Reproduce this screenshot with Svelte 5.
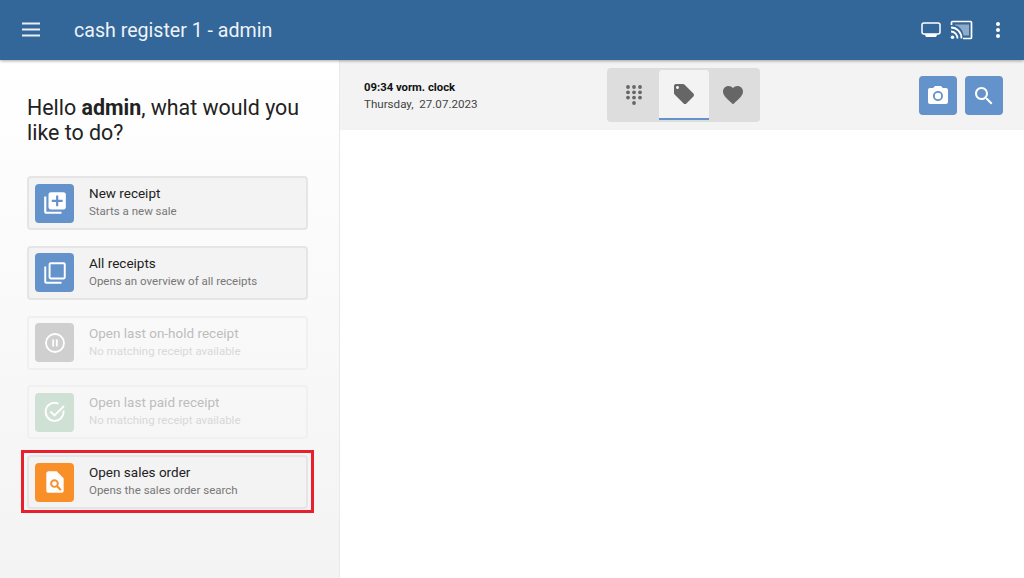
<script>
  const actions = [
    { title: "New receipt", sub: "Starts a new sale", icon: "new", color: "blue" },
    { title: "All receipts", sub: "Opens an overview of all receipts", icon: "all", color: "blue" },
    { title: "Open last on-hold receipt", sub: "No matching receipt available", icon: "pause", color: "grey", disabled: true },
    { title: "Open last paid receipt", sub: "No matching receipt available", icon: "check", color: "green", disabled: true },
    { title: "Open sales order", sub: "Opens the sales order search", icon: "order", color: "orange", marked: true },
  ];
</script>

<div class="page">
  <header class="topbar">
    <svg class="menu" viewBox="0 0 20 16" width="20" height="16">
      <path d="M1 1.5h18M1 7.5h18M1 13.5h18" stroke="#e8eef5" stroke-width="2" fill="none" />
    </svg>
    <h1>cash register 1 - admin</h1>
    <div class="top-icons">
      <svg viewBox="0 0 20 16" width="20" height="16" fill="none" stroke="#fff" stroke-width="1.5">
        <rect x="1" y="1" width="18" height="11" rx="2" />
        <path d="M3.500 12h13l-1.500 3H5z" fill="#fff" stroke="none" />
      </svg>
      <svg viewBox="0 0 23 20" width="23" height="20" fill="none" stroke="#fff">
        <path d="M1.500 5V2.500c0-.6.400-1 1-1h18c.6 0 1 .4 1 1v15c0 .6-.4 1-1 1H13" stroke-width="1.700" />
        <path d="M5 4.500h14v11h-5.500C13 10 9.500 6 5 5.500z" fill="#fff" fill-opacity="0.45" stroke="none" />
        <path d="M1 7.500c5.800 0 10.500 4.700 10.500 11M1 11.500c3.600 0 6.500 3.200 6.500 7" stroke-width="1.800" />
        <circle cx="2.500" cy="17.300" r="1.800" fill="#fff" stroke="none" />
      </svg>
      <svg class="dots" viewBox="0 0 6 18" width="6" height="18" fill="#fff">
        <circle cx="3" cy="3" r="2" /><circle cx="3" cy="9" r="2" /><circle cx="3" cy="15" r="2" />
      </svg>
    </div>
  </header>

  <div class="body">
    <aside class="side">
      <h2>Hello <b>admin</b>, what would you like to do?</h2>
      <div class="actions">
        {#each actions as a}
          <div class="action" class:disabled={a.disabled} class:marked={a.marked}>
            <span class="tile {a.color}">
              {#if a.icon === "new"}
                <svg viewBox="0 0 24 24" width="26" height="26" fill="#fff">
                  <path d="M2 6v14c0 1.100.9 2 2 2h14v-2H4V6z" />
                  <path d="M20 2H8c-1.100 0-2 .9-2 2v12c0 1.100.9 2 2 2h12c1.100 0 2-.9 2-2V4c0-1.100-.9-2-2-2zm-1 9h-4v4h-2v-4H9V9h4V5h2v4h4z" />
                </svg>
              {:else if a.icon === "all"}
                <svg viewBox="0 0 24 24" width="26" height="26" fill="none" stroke="#fff" stroke-width="1.800">
                  <path d="M3 6v14c0 .6.400 1 1 1h14" />
                  <rect x="7" y="3" width="14" height="14" rx="1" />
                </svg>
              {:else if a.icon === "pause"}
                <svg viewBox="0 0 24 24" width="24" height="24" fill="none" stroke="#fff" stroke-width="1.800">
                  <circle cx="12" cy="12" r="9" />
                  <path d="M10.200 8.500v7M13.800 8.500v7" />
                </svg>
              {:else if a.icon === "check"}
                <svg viewBox="0 0 24 24" width="24" height="24" fill="none" stroke="#fff" stroke-width="1.800">
                  <path d="M20.500 10.500A9 9 0 1 1 15.500 3.700" />
                  <path d="M7.500 11.500l4 4L21 6" />
                </svg>
              {:else}
                <svg viewBox="0 0 24 24" width="26" height="26" fill="#fff">
                  <path d="M6 2h7.500L20 8.500V20c0 1.100-.9 2-2 2H6c-1.100 0-2-.9-2-2V4c0-1.100.9-2 2-2z" />
                  <circle cx="11.500" cy="13.400" r="3.100" fill="none" stroke="#f98f28" stroke-width="1.800" />
                  <path d="M13.800 15.700l3.600 3.800" stroke="#f98f28" stroke-width="2" />
                </svg>
              {/if}
            </span>
            <span class="label">
              <strong>{a.title}</strong>
              <small>{a.sub}</small>
            </span>
          </div>
        {/each}
      </div>
    </aside>

    <main class="content">
      <div class="toolbar">
        <div class="clock">
          <b>09:34 vorm. clock</b>
          <span>Thursday,&nbsp; 27.07.2023</span>
        </div>
        <div class="tabs">
          <div class="tab">
            <svg viewBox="0 0 16 20" width="16" height="20" fill="#666">
              <circle cx="2" cy="2" r="1.900" /><circle cx="8" cy="2" r="1.900" /><circle cx="14" cy="2" r="1.900" />
              <circle cx="2" cy="7.300" r="1.900" /><circle cx="8" cy="7.300" r="1.900" /><circle cx="14" cy="7.300" r="1.900" />
              <circle cx="2" cy="12.600" r="1.900" /><circle cx="8" cy="12.600" r="1.900" /><circle cx="14" cy="12.600" r="1.900" />
              <circle cx="8" cy="18" r="1.900" />
            </svg>
          </div>
          <div class="tab active">
            <svg viewBox="0 0 24 24" width="24" height="24" fill="#666">
              <path d="M21.410 11.580l-9-9C12.050 2.220 11.550 2 11 2H4c-1.100 0-2 .9-2 2v7c0 .55.220 1.050.590 1.420l9 9c.360.360.860.580 1.410.580s1.050-.220 1.410-.590l7-7c.370-.360.590-.860.590-1.410s-.230-1.060-.590-1.420zM5.500 7C4.670 7 4 6.330 4 5.500S4.670 4 5.500 4 7 4.670 7 5.500 6.330 7 5.500 7z" />
            </svg>
          </div>
          <div class="tab last">
            <svg viewBox="0 0 24 24" width="24" height="24" fill="#666">
              <path d="M12 21.350l-1.450-1.320C5.400 15.360 2 12.280 2 8.500 2 5.420 4.420 3 7.500 3c1.740 0 3.410.810 4.500 2.090C13.090 3.810 14.760 3 16.500 3 19.580 3 22 5.420 22 8.500c0 3.780-3.400 6.860-8.550 11.540L12 21.350z" />
            </svg>
          </div>
        </div>
        <div class="tool-btns">
          <button aria-label="Camera">
            <svg viewBox="0 0 24 24" width="24" height="24" fill="#fff">
              <path d="M9 2L7.170 4H4c-1.100 0-2 .9-2 2v12c0 1.100.9 2 2 2h16c1.100 0 2-.9 2-2V6c0-1.100-.9-2-2-2h-3.170L15 2H9zm3 15c-2.760 0-5-2.240-5-5s2.240-5 5-5 5 2.240 5 5-2.240 5-5 5z" />
              <circle cx="12" cy="12" r="3.200" />
            </svg>
          </button>
          <button aria-label="Search">
            <svg viewBox="0 0 24 24" width="24" height="24" fill="#fff">
              <path d="M15.500 14h-.79l-.28-.27C15.410 12.590 16 11.110 16 9.500 16 5.910 13.090 3 9.500 3S3 5.910 3 9.500 5.910 16 9.500 16c1.610 0 3.090-.59 4.230-1.570l.27.28v.79l5 4.990L20.490 19l-4.990-5zm-6 0C7.010 14 5 11.990 5 9.500S7.010 5 9.500 5 14 7.010 14 9.500 11.990 14 9.500 14z" />
            </svg>
          </button>
        </div>
      </div>
    </main>
  </div>
</div>

<style>
  :global(body) {
    margin: 0;
    background: #fff;
  }

  .page {
    width: 1024px;
    height: 578px;
    display: flex;
    flex-direction: column;
    overflow: hidden;
    font-family: Roboto, "Liberation Sans", sans-serif;
    color: #222;
  }

  .topbar {
    height: 60px;
    flex: none;
    display: flex;
    align-items: center;
    padding: 0 23px 0 21px;
    background: #336699;
    box-shadow: 0 1px 3px rgba(0, 0, 0, 0.35);
    position: relative;
    color: #eef3f8;
  }

  .menu {
    margin-right: 33px;
  }

  h1 {
    margin: 0;
    font-size: 19.6px;
    font-weight: 400;
  }

  .top-icons {
    margin-left: auto;
    display: flex;
    align-items: center;
    gap: 9px;
  }

  .dots {
    margin-left: 13px;
  }

  .body {
    flex: 1;
    display: flex;
    min-height: 0;
  }

  .side {
    width: 340px;
    flex: none;
    box-sizing: border-box;
    padding: 35px 27px 0;
    border-right: 1px solid #e9e9e9;
    background: linear-gradient(#fff, #f3f3f3);
  }

  h2 {
    margin: 0 0 31px;
    font-size: 21.4px;
    line-height: 25px;
    font-weight: 400;
    width: 282px;
    color: #222;
  }

  h2 b {
    font-weight: 700;
  }

  .actions {
    display: flex;
    flex-direction: column;
    gap: 15.75px;
    width: 281px;
  }

  .action {
    height: 54px;
    box-sizing: border-box;
    display: flex;
    align-items: center;
    gap: 15px;
    padding: 0 6px;
    border: 2px solid #e5e5e5;
    border-radius: 4px;
    background: #f3f3f3;
    position: relative;
  }

  .action.disabled {
    background: none;
    border-color: #f0f0f0;
  }

  /* red annotation frame drawn over the card */
  .action.marked::after {
    content: "";
    position: absolute;
    inset: -7px -8px -6px -8px;
    border: 3px solid #e8202e;
  }

  .tile {
    width: 39px;
    height: 39px;
    flex: none;
    border-radius: 4px;
    display: flex;
    align-items: center;
    justify-content: center;
  }

  .blue { background: #6492ca; }
  .grey { background: #cfcfcf; }
  .green { background: #cfe0d5; }
  .orange { background: #f98f28; }

  .label {
    display: flex;
    flex-direction: column;
    min-width: 0;
    margin-top: -2px;
  }

  .label strong {
    font-size: 13.5px;
    line-height: 18px;
    font-weight: 400;
    color: #222;
  }

  .label small {
    font-size: 11.5px;
    line-height: 18px;
    color: #777;
  }

  .disabled .label strong {
    color: #bdbdbd;
  }

  .disabled .label small {
    color: #d8d8d8;
  }

  .content {
    flex: 1;
    min-width: 0;
    background: #fff;
  }

  .toolbar {
    height: 70px;
    box-sizing: border-box;
    display: flex;
    align-items: center;
    background: #f3f3f3;
    padding: 0 21px 0 24px;
  }

  .clock {
    width: 243px;
    display: flex;
    flex-direction: column;
    font-size: 11.6px;
    line-height: 16px;
    color: #444;
    margin-top: 1px;
  }

  .clock b {
    font-size: 11.3px;
    color: #111;
  }

  .tabs {
    display: flex;
    height: 54px;
    padding: 2px 0;
    box-sizing: border-box;
    background: #ddd;
    border-radius: 4px;
  }

  .tab {
    width: 51px;
    height: 50px;
    display: flex;
    align-items: center;
    justify-content: center;
    box-sizing: border-box;
  }

  .tab.active {
    width: 50px;
    background: #f3f3f3;
    border-bottom: 2px solid #6492ca;
    border-radius: 3px 3px 0 0;
  }

  .tab:first-child {
    width: 52px;
    padding-left: 1px;
  }

  .tab.last {
    padding-right: 3px;
  }

  .tool-btns {
    margin-left: auto;
    display: flex;
    gap: 8px;
    margin-top: 1px;
  }

  button {
    width: 38px;
    height: 39px;
    padding: 0;
    border: 0;
    border-radius: 4px;
    background: #6492ca;
    display: flex;
    align-items: center;
    justify-content: center;
  }
</style>
